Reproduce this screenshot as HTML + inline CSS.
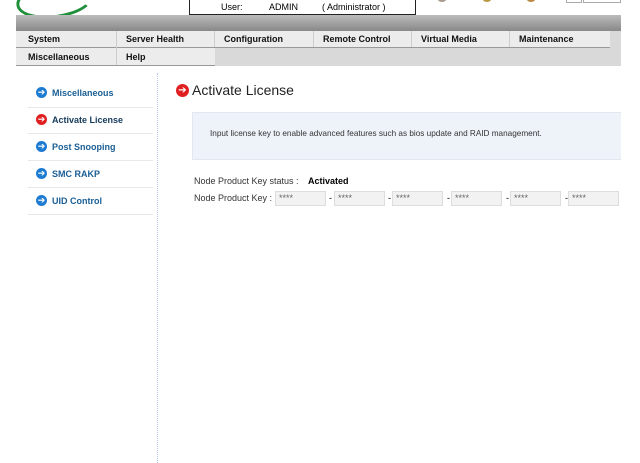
<!DOCTYPE html>
<html><head><style>
body{margin:0;width:640px;height:461px;background:#fff;font-family:"Liberation Sans",sans-serif;position:relative;overflow:hidden}
.a{position:absolute}
.m{position:absolute;font-size:9px;font-weight:bold;color:#111;padding-left:12px;box-sizing:border-box;line-height:16px}
.si{position:absolute;left:37px;font-size:9px;font-weight:bold;color:#1a5e96}
.ic{position:absolute;left:36px;width:11px;height:11px;border-radius:50%;background:#1e7bd2;color:#fff;font-size:9px;line-height:11px;text-align:center}
.sep{position:absolute;left:28px;width:125px;height:1px;background:#e8e8e8}
.in{position:absolute;top:191px;height:15px;width:51px;background:#f2f2f2;border:1px solid #ddd;font-size:9px;color:#666;line-height:13px;padding-left:3px;box-sizing:border-box}
.d{position:absolute;top:193px;font-size:9px}
</style></head><body>
<div class="a" style="left:16px;top:-18px;width:72px;height:30px;border:3px solid #1f8f3a;border-radius:50%;border-top-color:transparent;border-right-color:transparent;transform:rotate(-8deg)"></div>
<div class="a" style="left:189px;top:-2px;height:16px;border:1px solid #222;border-top:none;width:225px"></div>
<div class="a" style="left:221px;top:2px;font-size:9px">User:</div>
<div class="a" style="left:269px;top:2px;font-size:9px">ADMIN</div>
<div class="a" style="left:322px;top:2px;font-size:9px">( Administrator )</div>
<div class="a" style="left:438px;top:-3px;width:8px;height:5px;border-radius:50%;background:#a98"></div>
<div class="a" style="left:483px;top:-3px;width:8px;height:5px;border-radius:50%;background:#b94"></div>
<div class="a" style="left:527px;top:-3px;width:8px;height:5px;border-radius:50%;background:#b84"></div>
<div class="a" style="left:566px;top:-2px;width:14px;height:3px;border:1px solid #aaa"></div>
<div class="a" style="left:583px;top:-2px;width:36px;height:3px;border:1px solid #aaa"></div>
<div class="a" style="left:16px;top:15px;width:605px;height:16px;background:linear-gradient(#bbb,#888)"></div>
<div class="a" style="left:16px;top:31px;width:605px;height:35px;background:#d9d9d9"></div>
<div class="a" style="left:16px;top:31px;width:594px;height:16px;background:#ececec;border-bottom:1px solid #999"></div>
<div class="a" style="left:16px;top:48px;width:199px;height:17px;background:#ececec;border-bottom:1px solid #999"></div>
<div class="m" style="left:16px;top:31px">System</div>
<div class="m" style="left:114px;top:31px">Server Health</div>
<div class="m" style="left:212px;top:31px">Configuration</div>
<div class="m" style="left:311px;top:31px">Remote Control</div>
<div class="m" style="left:409px;top:31px">Virtual Media</div>
<div class="m" style="left:507px;top:31px">Maintenance</div>
<div class="m" style="left:16px;top:49px">Miscellaneous</div>
<div class="m" style="left:114px;top:49px">Help</div>
<div class="a" style="left:116px;top:31px;width:1px;height:34px;background:#ccc"></div>
<div class="a" style="left:214px;top:31px;width:1px;height:16px;background:#ccc"></div>
<div class="a" style="left:313px;top:31px;width:1px;height:16px;background:#ccc"></div>
<div class="a" style="left:411px;top:31px;width:1px;height:16px;background:#ccc"></div>
<div class="a" style="left:509px;top:31px;width:1px;height:16px;background:#ccc"></div>
<div class="a" style="left:157px;top:73px;width:0;height:390px;border-left:1px dotted #b8c8e8"></div>
<div class="ic" style="top:87px">➔</div><div class="si" style="left:52px;top:88px">Miscellaneous</div>
<div class="sep" style="top:107px"></div>
<div class="ic" style="top:114px;background:#e02020">➔</div><div class="si" style="left:52px;top:115px;color:#153a5a">Activate License</div>
<div class="sep" style="top:133px"></div>
<div class="ic" style="top:141px">➔</div><div class="si" style="left:52px;top:142px">Post Snooping</div>
<div class="sep" style="top:160px"></div>
<div class="ic" style="top:168px">➔</div><div class="si" style="left:52px;top:169px">SMC RAKP</div>
<div class="sep" style="top:187px"></div>
<div class="ic" style="top:195px">➔</div><div class="si" style="left:52px;top:196px">UID Control</div>
<div class="sep" style="top:214px"></div>
<div class="ic" style="left:176px;top:84px;width:13px;height:13px;line-height:13px;background:#e02020;font-size:10px">➔</div>
<div class="a" style="left:192px;top:82px;font-size:14px;color:#222">Activate License</div>
<div class="a" style="left:192px;top:112px;width:428px;height:46px;background:#eef3fa;border:1px solid #e2e8f0;border-right:none"></div>
<div class="a" style="left:210px;top:129px;font-size:8.2px;color:#333">Input license key to enable advanced features such as bios update and RAID management.</div>
<div class="a" style="left:194px;top:176px;font-size:9px;color:#333">Node Product Key status :</div>
<div class="a" style="left:308px;top:176px;font-size:9px;font-weight:bold">Activated</div>
<div class="a" style="left:194px;top:193px;font-size:9px;color:#333">Node Product Key :</div>
<div class="in" style="left:275px">****</div>
<div class="d" style="left:329px">-</div><div class="in" style="left:334px">****</div>
<div class="d" style="left:388px">-</div><div class="in" style="left:392px">****</div>
<div class="d" style="left:447px">-</div><div class="in" style="left:451px">****</div>
<div class="d" style="left:506px">-</div><div class="in" style="left:510px">****</div>
<div class="d" style="left:565px">-</div><div class="in" style="left:568px">****</div>
</body></html>
